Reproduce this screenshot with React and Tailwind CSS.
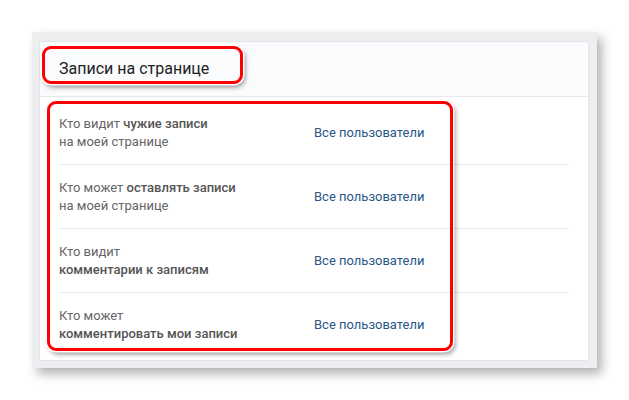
import React from "react";

const rows = [
  { a: "Кто видит ", b: "чужие записи", c: "на моей странице", boldSecond: false },
  { a: "Кто может ", b: "оставлять записи", c: "на моей странице", boldSecond: false },
  { a: "Кто видит", b: "", c: "комментарии к записям", boldSecond: true },
  { a: "Кто может", b: "", c: "комментировать мои записи", boldSecond: true },
];

export default function App() {
  return (
    <div
      className="relative w-[629px] h-[400px] bg-white pt-[32px] pl-[32px]"
      style={{ fontFamily: "Roboto, 'Noto Sans', Arial, sans-serif" }}
    >
      <div className="w-[565px] h-[336px] bg-[#edeef0] pt-[9px] pl-[7px] shadow-[5px_6px_10px_rgba(0,0,0,0.3)]">
        <div className="w-[550px] h-[320px] bg-white border border-[#e3e4e8] rounded-[2px] overflow-hidden">
          <div className="h-[55px] bg-[#fafbfc] border-b border-[#e7e8ec] flex items-center pl-[19px] text-[16px] text-[#222]">
            Записи на странице
          </div>
          <div className="pt-[4px] px-[19px]">
            {rows.map((r, i) => (
              <div
                key={i}
                className={
                  "h-[64px] flex items-center " +
                  (i < rows.length - 1 ? "border-b border-[#e7e8ec]" : "")
                }
              >
                <div className="w-[255px] text-[13px] leading-[18px] text-[#656565]">
                  <div>
                    {r.a}
                    {r.b && <span className="font-medium text-[#555]">{r.b}</span>}
                  </div>
                  <div className={r.boldSecond ? "font-medium text-[#555]" : ""}>{r.c}</div>
                </div>
                <div className="text-[13px] text-[#2a5885]">Все пользователи</div>
              </div>
            ))}
          </div>
        </div>
      </div>

      <div className="absolute left-[42px] top-[46px] w-[201px] h-[38px] rounded-[9px] border-[3px] border-[#f00] shadow-[0_0_0_1.5px_#fff,2px_3px_5px_rgba(0,0,0,0.45)]" />
      <div className="absolute left-[47px] top-[101px] w-[406px] h-[250px] rounded-[9px] border-[3px] border-[#f00] shadow-[0_0_0_1.5px_#fff,2px_3px_5px_rgba(0,0,0,0.45)]" />
    </div>
  );
}
